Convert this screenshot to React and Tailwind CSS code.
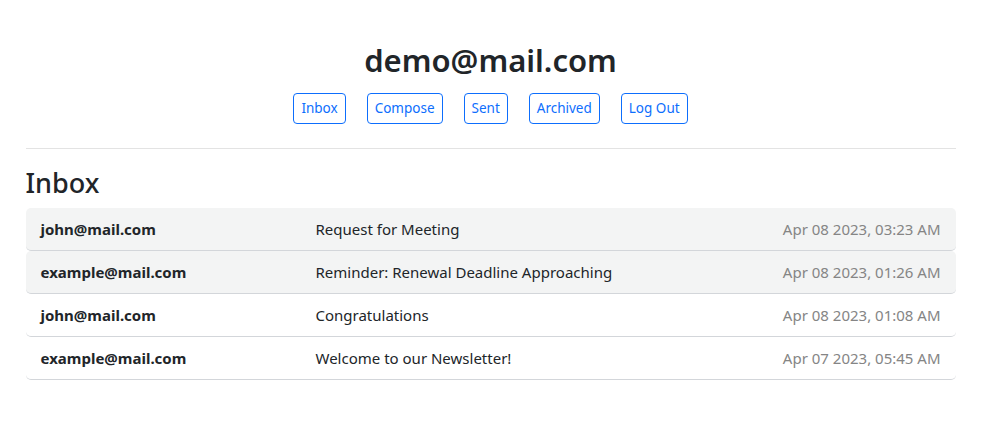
const emails = [
  { from: 'john@mail.com', subject: 'Request for Meeting', date: 'Apr 08 2023, 03:23 AM', read: true },
  { from: 'example@mail.com', subject: 'Reminder: Renewal Deadline Approaching', date: 'Apr 08 2023, 01:26 AM', read: true },
  { from: 'john@mail.com', subject: 'Congratulations', date: 'Apr 08 2023, 01:08 AM', read: false },
  { from: 'example@mail.com', subject: 'Welcome to our Newsletter!', date: 'Apr 07 2023, 05:45 AM', read: false },
];

const navItems = ['Inbox', 'Compose', 'Sent', 'Archived', 'Log Out'];

const App = () => {
  return (
    <div className="min-h-screen bg-white text-[#212529] font-['Noto_Sans',sans-serif]">
      <div className="mx-auto w-[930px] pt-[42px]">
        {/* Header */}
        <div className="text-center">
          <h1 className="text-[31px] font-semibold leading-[1.2]">demo@mail.com</h1>
          <div className="mt-[14px] flex justify-center gap-[21px]">
            {navItems.map((item) => (
              <button
                key={item}
                className="h-[31px] px-[7px] border border-[#0d6efd] rounded-[4px] text-[13.5px] text-[#0d6efd] leading-none"
              >
                {item}
              </button>
            ))}
          </div>
        </div>

        <hr className="mt-[24px] border-t border-[#e3e3e3]" />

        {/* Inbox */}
        <h2 className="mt-[18px] mb-[8px] text-[27px] font-medium leading-[1.2]">Inbox</h2>
        <div className="flex flex-col">
          {emails.map((email, i) => (
            <div
              key={i}
              className={`flex items-center h-[43px] px-[15px] pt-[2px] rounded-[5px] border-b border-[#d3d6da] text-[15px] ${email.read ? 'bg-[#f3f4f4]' : 'bg-white'}`}
            >
              <div className="w-[275px] font-bold">{email.from}</div>
              <div className="flex-1">{email.subject}</div>
              <div className="text-[#858585]">{email.date}</div>
            </div>
          ))}
        </div>
      </div>
    </div>
  );
};

export default App;
